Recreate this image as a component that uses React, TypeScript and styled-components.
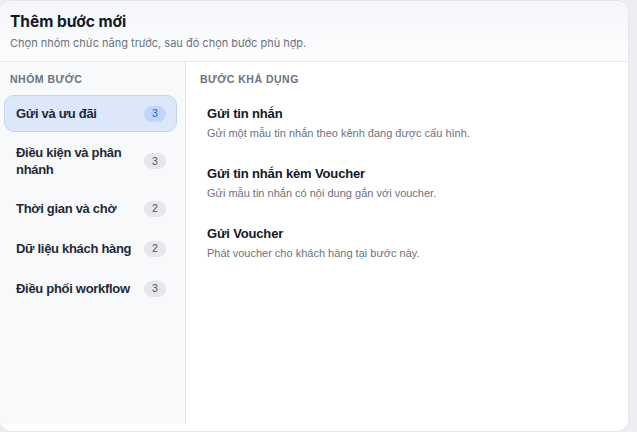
import styled, { createGlobalStyle } from 'styled-components';

const GlobalStyle = createGlobalStyle`
    html, body {
        margin: 0;
        padding: 0;
        height: 100%;
        background: #eceef1;
    }
    #root {
        height: 100%;
    }
    * {
        box-sizing: border-box;
    }
`

const Page = styled.div`
    height: 432px;
    width: 637px;
    padding-right: 8px;
`

const Dialog = styled.div`
    height: 100%;
    background: #ffffff;
    border: 1px solid #e3e5e8;
    border-left: none;
    border-radius: 12px;
    display: flex;
    flex-direction: column;
    overflow: hidden;
    font-family: "Liberation Sans", Arial, sans-serif;
`

const Header = styled.div`
    padding: 11px 10px 10px 10px;
    background: linear-gradient(180deg, #f4f6f9 0%, #fdfdfe 100%);
    border-bottom: 1px solid #e6e8eb;
    font-family: Inter, "Noto Sans", sans-serif;
`

const Title = styled.div`
    font-size: 15.5px;
    font-weight: 700;
    color: #111827;
    line-height: 20px;
`

const Subtitle = styled.div`
    margin-top: 3px;
    font-size: 11px;
    color: #6b7280;
    line-height: 16px;
`

const Body = styled.div`
    flex: 1;
    display: grid;
    grid-template-columns: 186px 1fr;
    padding-bottom: 7px;
    min-height: 0;
`

const Sidebar = styled.div`
    background: #f8f9fb;
    border-right: 1px solid #e3e5e8;
    padding: 10px 8px 8px 4px;
`

const SectionLabel = styled.div<{ $indent: number }>`
    font-size: 10.5px;
    font-weight: 700;
    letter-spacing: 0.5px;
    text-transform: uppercase;
    color: #6b7280;
    padding-left: ${({ $indent }) => $indent}px;
    line-height: 14px;
    margin-bottom: 9px;
`

const GroupList = styled.div`
    display: flex;
    flex-direction: column;
    gap: 3px;
`

const GroupItem = styled.div<{ $active?: boolean }>`
    display: flex;
    align-items: center;
    justify-content: space-between;
    gap: 8px;
    min-height: 37px;
    padding: 8px 10px 8px 11px;
    border-radius: 10px;
    border: 1px solid ${({ $active }) => ($active ? '#c3d5f6' : 'transparent')};
    background: ${({ $active }) => ($active ? '#dde7fa' : 'transparent')};
    font-size: 13px;
    font-weight: 600;
    letter-spacing: -0.3px;
    color: #1f2937;
    line-height: 17px;
`

const Badge = styled.span<{ $active?: boolean }>`
    flex-shrink: 0;
    min-width: 22px;
    height: 16px;
    padding: 0 7px;
    border-radius: 999px;
    display: inline-flex;
    align-items: center;
    justify-content: center;
    font-size: 10.5px;
    font-weight: 500;
    letter-spacing: 0;
    background: ${({ $active }) => ($active ? '#c0d5fa' : '#e5e7eb')};
    color: ${({ $active }) => ($active ? '#2563eb' : '#4b5563')};
`

const Content = styled.div`
    padding: 10px 14px 8px 14px;
`

const StepList = styled.div`
    display: flex;
    flex-direction: column;
    gap: 4px;
`

const StepItem = styled.div`
    padding: 10px 7px;
    border-radius: 10px;
`

const StepTitle = styled.div`
    font-size: 13px;
    font-weight: 600;
    letter-spacing: -0.15px;
    color: #111827;
    line-height: 18px;
`

const StepDesc = styled.div`
    margin-top: 2px;
    font-size: 11px;
    color: #6b7280;
    line-height: 16px;
`

const groups = [
    { name: 'Gửi và ưu đãi', count: 3 },
    { name: 'Điều kiện và phân nhánh', count: 3 },
    { name: 'Thời gian và chờ', count: 2 },
    { name: 'Dữ liệu khách hàng', count: 2 },
    { name: 'Điều phối workflow', count: 3 },
]

const steps = [
    { title: 'Gửi tin nhắn', desc: 'Gửi một mẫu tin nhắn theo kênh đang được cấu hình.' },
    { title: 'Gửi tin nhắn kèm Voucher', desc: 'Gửi mẫu tin nhắn có nội dung gắn với voucher.' },
    { title: 'Gửi Voucher', desc: 'Phát voucher cho khách hàng tại bước này.' },
]

const App = () => {
    const active = 0;

    return (
        <>
            <GlobalStyle />
            <Page>
                <Dialog>
                    <Header>
                        <Title>Thêm bước mới</Title>
                        <Subtitle>Chọn nhóm chức năng trước, sau đó chọn bước phù hợp.</Subtitle>
                    </Header>
                    <Body>
                        <Sidebar>
                            <SectionLabel $indent={6}>Nhóm bước</SectionLabel>
                            <GroupList>
                                {groups.map((g, i) => (
                                    <GroupItem key={g.name} $active={i === active}>
                                        <span>{g.name}</span>
                                        <Badge $active={i === active}>{g.count}</Badge>
                                    </GroupItem>
                                ))}
                            </GroupList>
                        </Sidebar>
                        <Content>
                            <SectionLabel $indent={0}>Bước khả dụng</SectionLabel>
                            <StepList>
                                {steps.map((s) => (
                                    <StepItem key={s.title}>
                                        <StepTitle>{s.title}</StepTitle>
                                        <StepDesc>{s.desc}</StepDesc>
                                    </StepItem>
                                ))}
                            </StepList>
                        </Content>
                    </Body>
                </Dialog>
            </Page>
        </>
    )
}

export default App
